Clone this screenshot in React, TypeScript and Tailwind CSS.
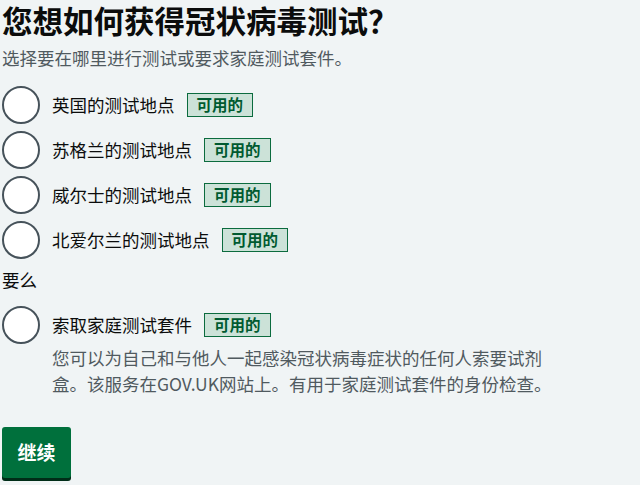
import React from "react";

const font = { fontFamily: '"Noto Sans CJK SC", "Liberation Sans", sans-serif' };

function Tag() {
  return (
    <span className="inline-flex items-center h-[24px] px-[9px] border border-[#0b6b3e] bg-[#cce2d8] text-[#005a30] text-[15.5px] font-bold leading-none">
      可用的
    </span>
  );
}

function Radio({ label, children }: { label: string; children?: React.ReactNode }) {
  return (
    <div className="flex items-start">
      <span className="w-[38px] h-[38px] rounded-full border-[2px] border-[#46525a] bg-white shrink-0" />
      <div className="ml-[12px]">
        <div className="flex items-center h-[38px] gap-[12px]">
          <span className="text-[17.5px] text-[#0b0c0c]">{label}</span>
          <Tag />
        </div>
        {children}
      </div>
    </div>
  );
}

export default function App() {
  return (
    <div className="min-h-[485px] bg-[#f0f4f5] px-[2px] text-[#0b0c0c]" style={font}>
      <h1 className="text-[30.5px] font-bold leading-[40px]">您想如何获得冠状病毒测试？</h1>
      <p className="mt-[6px] text-[17.5px] text-[#505a5f] leading-[24px]">选择要在哪里进行测试或要求家庭测试套件。</p>

      <div className="mt-[16px] flex flex-col gap-[7px]">
        <Radio label="英国的测试地点" />
        <Radio label="苏格兰的测试地点" />
        <Radio label="威尔士的测试地点" />
        <Radio label="北爱尔兰的测试地点" />
      </div>

      <p className="mt-[9px] text-[17.5px] leading-[24px]">要么</p>

      <div className="mt-[14px]">
        <Radio label="索取家庭测试套件">
          <p className="text-[17.5px] text-[#505a5f] leading-[26px] w-[506px] mt-[1px]">
            您可以为自己和与他人一起感染冠状病毒症状的任何人索要试剂盒。该服务在GOV.UK网站上。有用于家庭测试套件的身份检查。
          </p>
        </Radio>
      </div>

      <button className="mt-[30px] w-[69px] h-[51px] bg-[#00703c] rounded-[3px] shadow-[0_3px_0_#002d18] text-white text-[19px] font-bold">
        继续
      </button>
    </div>
  );
}
